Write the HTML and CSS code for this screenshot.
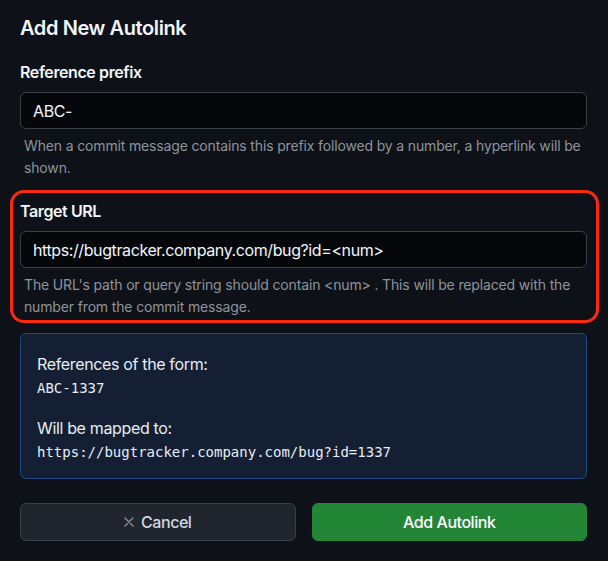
FILE: index.html
```html
<!DOCTYPE html>
<html lang="en">
<head>
    <meta charset="UTF-8">
    <meta name="viewport" content="width=device-width, initial-scale=1.0">
    <title>Add New Autolink</title>
    <link rel="stylesheet" href="styles.css">
</head>
<body>
    <form class="dialog" onsubmit="return false;">
        <h2 class="title">Add New Autolink</h2>

        <div class="field">
            <label class="label" for="prefix">Reference prefix</label>
            <input type="text" id="prefix" class="input" value="ABC-">
            <p class="hint">When a commit message contains this prefix followed by a number, a hyperlink will be shown.</p>
        </div>

        <div class="field highlight">
            <label class="label" for="url">Target URL</label>
            <input type="text" id="url" class="input" value="https://bugtracker.company.com/bug?id=<num>">
            <p class="hint">The URL's path or query string should contain &lt;num&gt; . This will be replaced with the number from the commit message.</p>
        </div>

        <div class="preview">
            <div class="preview-label">References of the form:</div>
            <div class="preview-code">ABC-1337</div>
            <div class="preview-label spaced">Will be mapped to:</div>
            <div class="preview-code">https://bugtracker.company.com/bug?id=1337</div>
        </div>

        <div class="actions">
            <button type="button" class="button cancel">
                <svg class="icon" width="10" height="10" viewBox="0 0 10 10"><path d="M1 1L9 9M9 1L1 9" stroke="currentColor" stroke-width="1.3" stroke-linecap="round"/></svg>
                Cancel
            </button>
            <button type="submit" class="button primary">Add Autolink</button>
        </div>
    </form>
</body>
</html>
```

FILE: styles.css
```css
body {
    margin: 0;
    background-color: #0e1117;
    font-family: Inter, "Noto Sans", sans-serif;
    color: #f0f6fc;
}

.dialog {
    display: flex;
    flex-direction: column;
    padding: 14px 21px 20px 20px;
}

.title {
    margin: 0 0 18px;
    font-size: 20px;
    line-height: 28px;
    font-weight: 600;
    letter-spacing: -0.4px;
}

.field {
    display: flex;
    flex-direction: column;
}

.label {
    font-size: 16px;
    line-height: 24px;
    font-weight: 600;
    letter-spacing: -0.4px;
    margin-bottom: 8px;
}

.input {
    height: 37px;
    box-sizing: border-box;
    padding: 0 12px;
    background: #05070a;
    border: 1px solid #3a4048;
    border-radius: 6px;
    color: #f0f6fc;
    font-family: inherit;
    font-size: 16px;
    letter-spacing: -0.4px;
}

.hint {
    margin: 6px 0 0 4px;
    font-size: 14px;
    line-height: 22px;
    letter-spacing: -0.15px;
    color: #8d949d;
}

.field.highlight {
    margin: 11px -12px 10px -10px;
    padding: 6px 9px 2px 7px;
    border: 3px solid #fb2a0f;
    border-radius: 14px;
}

.preview {
    padding: 18px 16px 14px 16px;
    background: #141f33;
    border: 1px solid #1e4a80;
    border-radius: 6px;
}

.preview-label {
    font-size: 16px;
    line-height: 24px;
    letter-spacing: -0.35px;
    color: #e6edf3;
}

.preview-label.spaced {
    margin-top: 16px;
}

.preview-code {
    font-family: "DejaVu Sans Mono", monospace;
    font-size: 14px;
    line-height: 24px;
    color: #e6edf3;
}

.actions {
    display: grid;
    grid-template-columns: 1fr 1fr;
    gap: 16px;
    margin-top: 24px;
}

.button {
    height: 38px;
    display: flex;
    align-items: center;
    justify-content: center;
    gap: 7px;
    border-radius: 6px;
    font-family: inherit;
    font-size: 16px;
    font-weight: 500;
    letter-spacing: -0.45px;
    cursor: pointer;
}

.button.cancel {
    background: #21252d;
    border: 1px solid #3a3f48;
    color: #d1d7e0;
}

.button.cancel .icon {
    color: #8d949d;
}

.button.primary {
    background: #238636;
    border: 1px solid #238636;
    color: #fff;
}
```
